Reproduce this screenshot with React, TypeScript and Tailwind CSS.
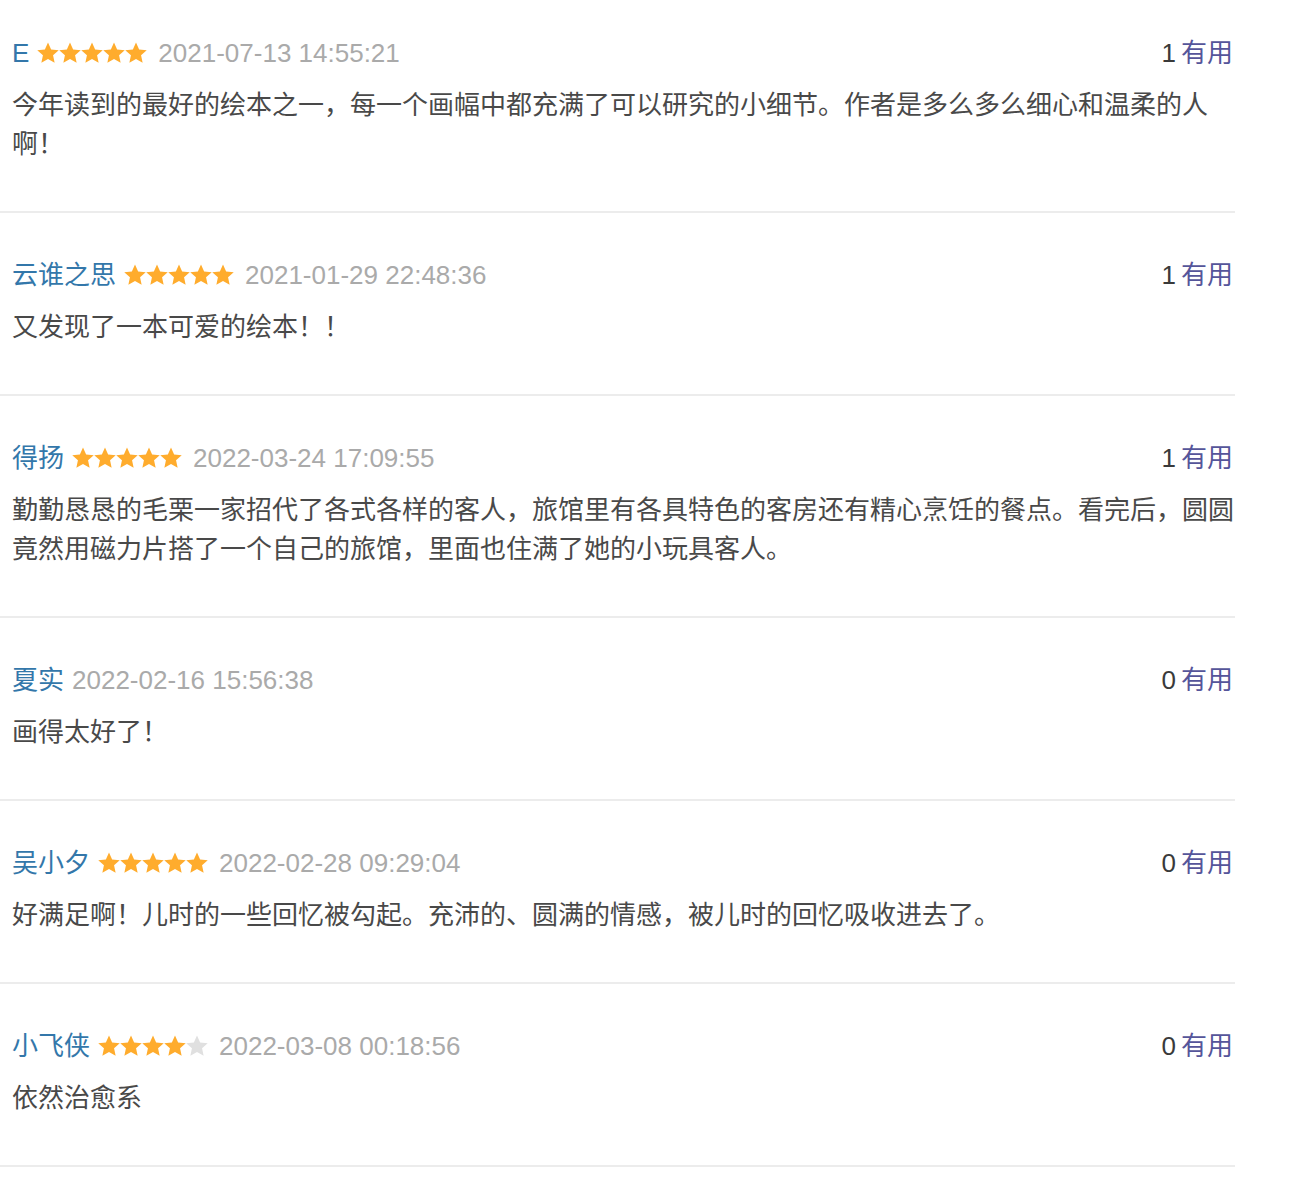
const reviews = [
  {
    name: "E",
    stars: 5,
    time: "2021-07-13 14:55:21",
    votes: 1,
    text: "今年读到的最好的绘本之一，每一个画幅中都充满了可以研究的小细节。作者是多么多么细心和温柔的人啊！",
  },
  {
    name: "云谁之思",
    stars: 5,
    time: "2021-01-29 22:48:36",
    votes: 1,
    text: "又发现了一本可爱的绘本！！",
  },
  {
    name: "得扬",
    stars: 5,
    time: "2022-03-24 17:09:55",
    votes: 1,
    text: "勤勤恳恳的毛栗一家招代了各式各样的客人，旅馆里有各具特色的客房还有精心烹饪的餐点。看完后，圆圆竟然用磁力片搭了一个自己的旅馆，里面也住满了她的小玩具客人。",
  },
  {
    name: "夏实",
    stars: 0,
    time: "2022-02-16 15:56:38",
    votes: 0,
    text: "画得太好了！",
  },
  {
    name: "吴小夕",
    stars: 5,
    time: "2022-02-28 09:29:04",
    votes: 0,
    text: "好满足啊！儿时的一些回忆被勾起。充沛的、圆满的情感，被儿时的回忆吸收进去了。",
  },
  {
    name: "小飞侠",
    stars: 4,
    time: "2022-03-08 00:18:56",
    votes: 0,
    text: "依然治愈系",
  },
];

const Star = ({ on }: { on: boolean }) => (
  <svg width="22" height="22" viewBox="0 0 24 24" className="block">
    <path
      d="M12 .5L15.41 8.11L23.7 9L17.52 14.59L19.23 22.75L12 18.6L4.77 22.75L6.48 14.59L.3 9L8.59 8.11Z"
      fill={on ? "#ffac2d" : "#e0e0e0"}
    />
  </svg>
);

const Stars = ({ count }: { count: number }) => (
  <span className="flex ml-[8px] mr-[11px] mt-[-2px]">
    {[0, 1, 2, 3, 4].map((i) => (
      <Star key={i} on={i < count} />
    ))}
  </span>
);

export default function App() {
  return (
    <div
      className="bg-white min-h-screen w-[1235px] text-[26px]"
      style={{ fontFamily: '"Liberation Sans", "Noto Sans CJK SC", sans-serif' }}
    >
      {reviews.map((r, i) => (
        <div
          key={i}
          className={`border-b-2 border-[#ececec] pb-[47px] ${i === 0 ? "pt-[34px]" : "pt-[43px]"}`}
        >
          {/* header row */}
          <div className="flex items-center justify-between pl-[12px] pr-[2px] leading-[39px] h-[39px]">
            <div className="flex items-center">
              <span className="text-[#3377aa]">{r.name}</span>
              {r.stars > 0 ? <Stars count={r.stars} /> : <span className="w-[8px]" />}
              <span className="text-[#aaaaaa]">{r.time}</span>
            </div>
            <div className="flex items-center">
              <span className="text-[#3a3a3a] mr-[5px]">{r.votes}</span>
              <span className="text-[#55559a]">有用</span>
            </div>
          </div>
          {/* body */}
          <p className="mt-[13px] pl-[12px] leading-[39px] text-[#494949]">{r.text}</p>
        </div>
      ))}
    </div>
  );
}
